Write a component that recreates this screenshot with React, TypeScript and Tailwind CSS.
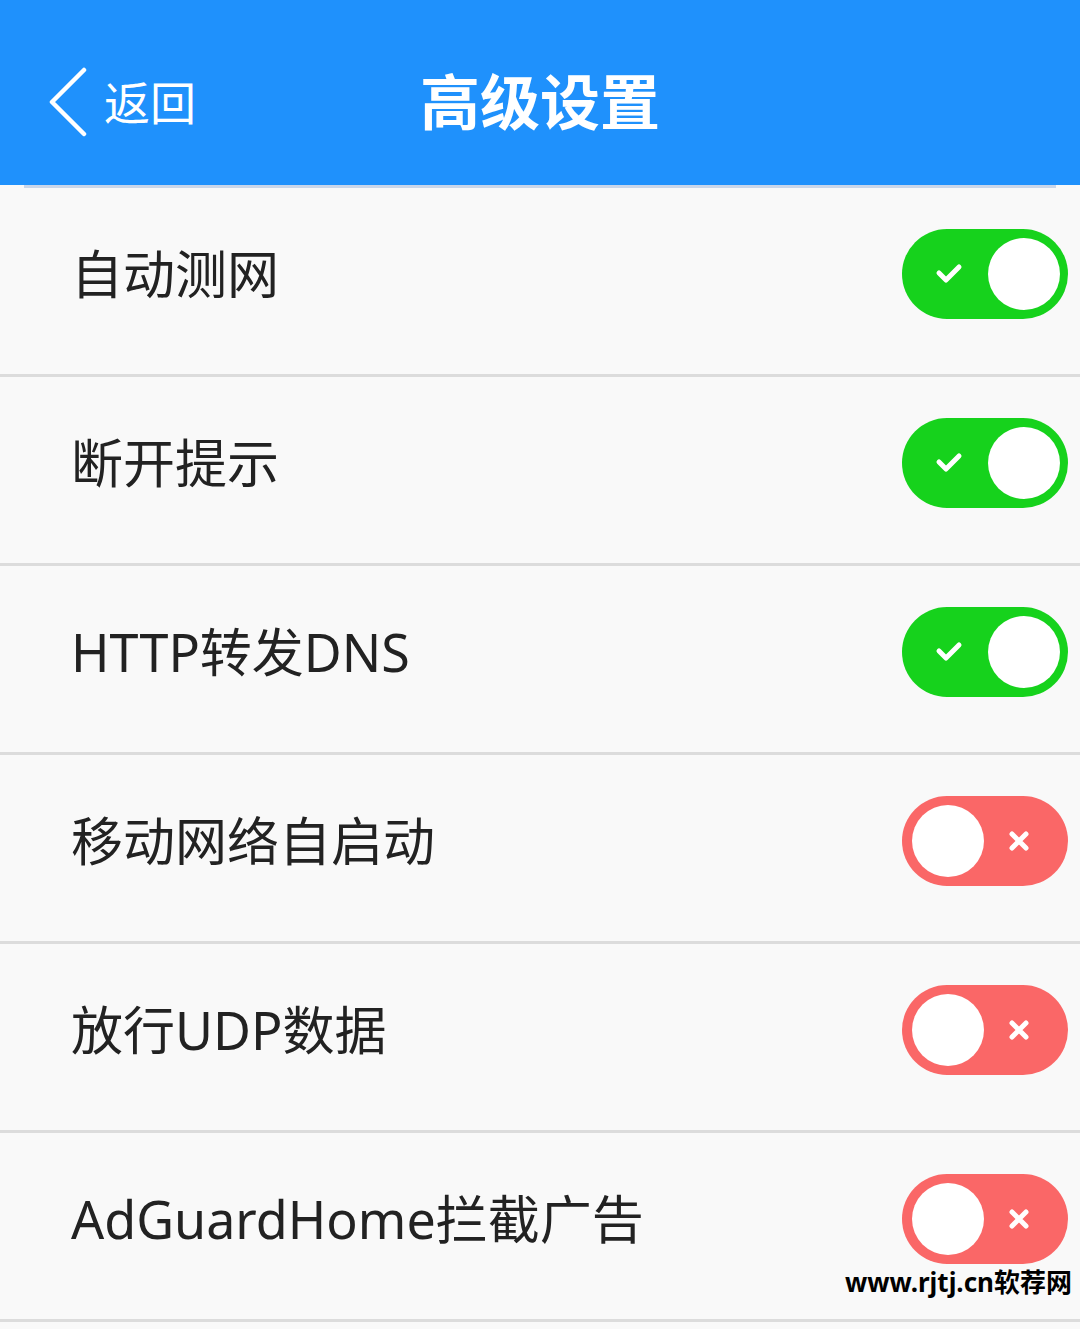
import { Fragment } from 'react'

const rows = [
  { label: '自动测网', on: true },
  { label: '断开提示', on: true },
  { label: 'HTTP转发DNS', on: true },
  { label: '移动网络自启动', on: false },
  { label: '放行UDP数据', on: false },
  { label: 'AdGuardHome拦截广告', on: false },
]

const font = { fontFamily: '"Noto Sans", "Noto Sans CJK SC", sans-serif' }

function Toggle({ on }: { on: boolean }) {
  if (on) {
    return (
      <div className="w-[166px] h-[90px] rounded-full bg-[#16d21c] flex items-center justify-between pl-[32px] pr-[8px]">
        <svg width="30" height="24" viewBox="0 0 30 24">
          <path d="M5 11 L12 18 L25 5" fill="none" stroke="white" strokeWidth="5" strokeLinecap="round" strokeLinejoin="round" />
        </svg>
        <div className="w-[72px] h-[72px] rounded-full bg-white" />
      </div>
    )
  }
  return (
    <div className="w-[166px] h-[90px] rounded-full bg-[#fa6767] flex items-center justify-between pl-[10px] pr-[38px]">
      <div className="w-[72px] h-[72px] rounded-full bg-white" />
      <svg width="22" height="22" viewBox="0 0 22 22">
        <path d="M4 4 L18 18 M18 4 L4 18" fill="none" stroke="white" strokeWidth="5" strokeLinecap="round" />
      </svg>
    </div>
  )
}

export default function App() {
  return (
    <div className="w-[1080px] h-[1329px] bg-[#f9f9f9] overflow-hidden relative" style={font}>
      <div className="h-[185px] bg-[#1f91fc] flex items-center relative pt-[18px]">
        <div className="flex items-center pl-[46px] gap-[16px]">
          <svg width="42" height="70" viewBox="0 0 42 70">
            <path d="M38 3 L6 35 L38 67" fill="none" stroke="white" strokeWidth="4.5" strokeLinecap="round" strokeLinejoin="round" />
          </svg>
          <span className="text-white text-[46px] leading-none">返回</span>
        </div>
        <div className="absolute inset-0 flex items-center justify-center pt-[18px]">
          <span className="text-white text-[60px] font-bold leading-none">高级设置</span>
        </div>
      </div>
      <div className="mx-[24px] h-[3px] bg-[#c9d6ea]" />
      {rows.map((r, i) => (
        <Fragment key={i}>
          <div className="h-[186px] flex items-center justify-between pl-[71px] pr-[12px] pb-[14px]">
            <span className="text-[52px] text-[#222] leading-none">{r.label}</span>
            <Toggle on={r.on} />
          </div>
          <div className="h-[3px] bg-[#dcdcdc]" />
        </Fragment>
      ))}
      <div className="absolute right-[8px] top-[1269px] text-[26px] font-bold text-black leading-none" style={{ fontFamily: '"Noto Sans", "Noto Sans CJK SC", sans-serif' }}>
        www.rjtj.cn软荐网
      </div>
    </div>
  )
}
